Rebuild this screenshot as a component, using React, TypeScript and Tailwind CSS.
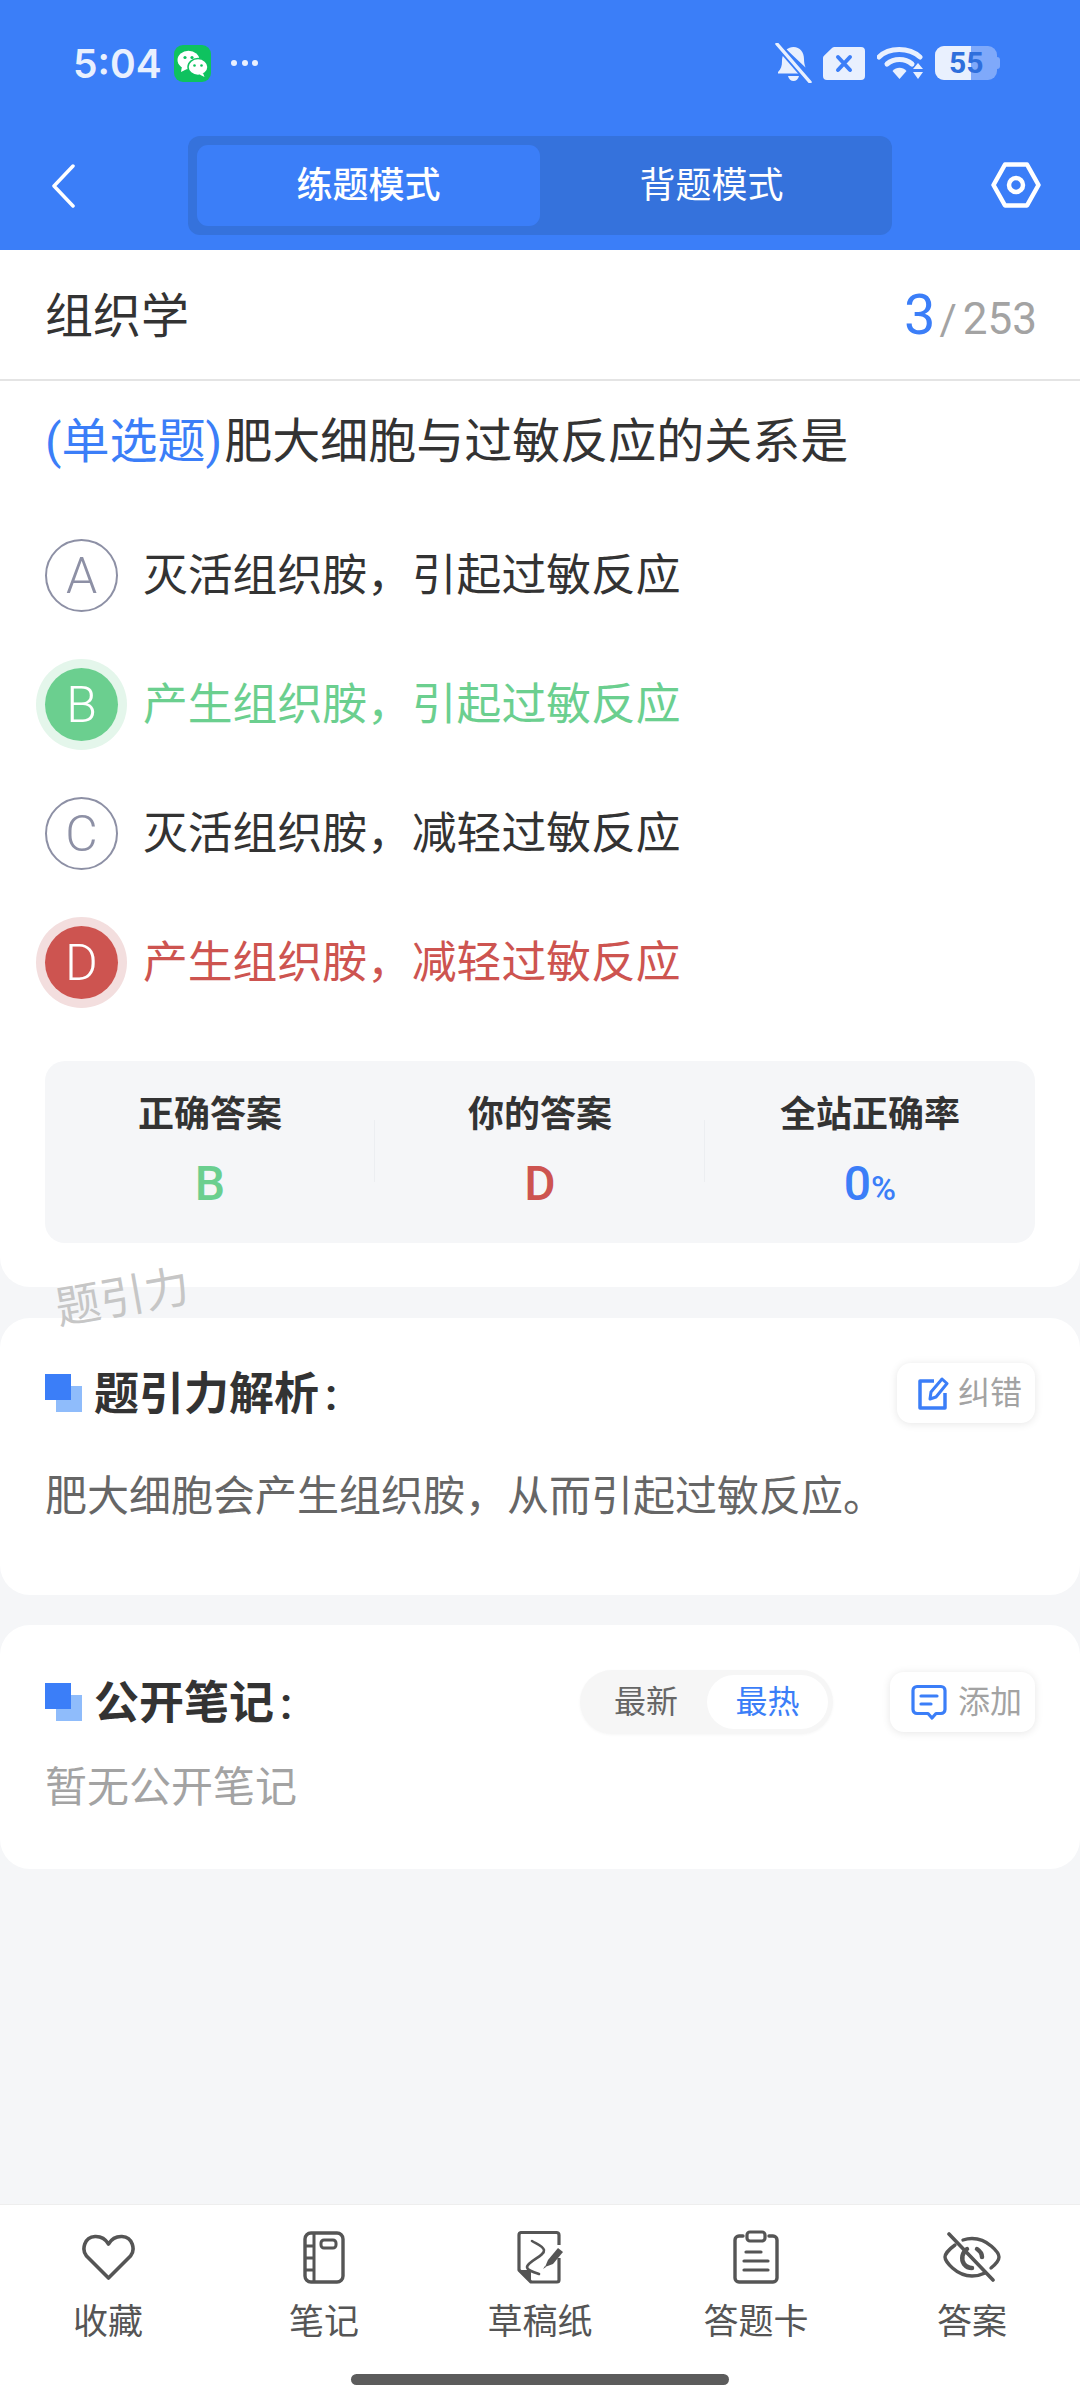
import React from "react";

const Squares = () => (
  <span className="relative block w-[37px] h-[38px] shrink-0">
    <span className="absolute right-0 bottom-0 w-[26px] h-[26px] bg-[#8fbcfb]" />
    <span className="absolute left-0 top-0 w-[26px] h-[26px] bg-[#3b7ef8]" />
  </span>
);

const options = [
  { k: "A", t: "灭活组织胺，引起过敏反应", s: "plain" },
  { k: "B", t: "产生组织胺，引起过敏反应", s: "ok" },
  { k: "C", t: "灭活组织胺，减轻过敏反应", s: "plain" },
  { k: "D", t: "产生组织胺，减轻过敏反应", s: "bad" },
];

function Option({ k, t, s }: { k: string; t: string; s: string }) {
  const circle =
    s === "ok"
      ? "bg-[#6bcf8f] text-white ring-[9px] ring-[#e4f6eb]"
      : s === "bad"
      ? "bg-[#cd5450] text-white ring-[9px] ring-[#f3dede]"
      : "border-2 border-[#8d90a5] text-[#8d90a5]";
  const text = s === "ok" ? "text-[#6bcf8f]" : s === "bad" ? "text-[#cd5450]" : "text-[#333333]";
  return (
    <div className="h-[129px] flex items-center">
      <span className={`w-[73px] h-[73px] rounded-full flex items-center justify-center text-[50px] font-light leading-none shrink-0 ${circle}`}>{k}</span>
      <span className={`ml-[25px] mt-[2px] text-[44.800px] leading-none whitespace-nowrap ${text}`}>{t}</span>
    </div>
  );
}

function Stat({ label, children, divider }: { label: string; children: React.ReactNode; divider?: boolean }) {
  return (
    <div className="relative w-[330px] flex flex-col items-center pt-[35px]">
      <span className="text-[36px] leading-[38px] font-semibold text-[#333333]">{label}</span>
      <span className="mt-[22px] h-[56px] flex items-baseline font-medium text-[48px] leading-[56px]">{children}</span>
      {divider && <span className="absolute right-0 top-[59px] h-[62px] w-[1px] bg-[#eceef1]" />}
    </div>
  );
}

const NavItem = ({ label, children }: { label: string; children: React.ReactNode }) => (
  <div className="w-[216px] flex flex-col items-center">
    <div className="h-[56px] flex items-center justify-center">{children}</div>
    <span className="mt-[19px] text-[35px] leading-[38px] text-[#555555]">{label}</span>
  </div>
);

export default function App() {
  return (
    <div className="relative w-[1080px] min-h-[2400px] flex flex-col bg-[#f5f6f8] font-['Roboto','Noto_Sans_CJK_SC',sans-serif] overflow-hidden">
      {/* header */}
      <header className="h-[250px] bg-[#3b7ef8] flex flex-col shrink-0">
        <div className="h-[126px] flex items-center pl-[73px] pr-[80px] text-[#e9f0fe]">
          <span className="font-['Inter',sans-serif] font-semibold text-[39px] leading-none w-[101px]">5:04</span>
          <span className="w-[37px] h-[37px] rounded-[9px] bg-[#0ec25f] flex items-center justify-center">
            <svg width="31" height="27" viewBox="0 0 31 27">
              <ellipse cx="11.5" cy="10" rx="11" ry="9.2" fill="#fff" />
              <path d="M5 16l-1 6 6-3z" fill="#fff" />
              <ellipse cx="21" cy="17" rx="10" ry="8.4" fill="#fff" stroke="#0ec25f" strokeWidth="1.5" />
              <path d="M26 23l1.5 4-5-2.5z" fill="#fff" />
              <circle cx="8" cy="7.5" r="1.6" fill="#0ec25f" />
              <circle cx="15" cy="7.5" r="1.6" fill="#0ec25f" />
              <circle cx="17.5" cy="15.5" r="1.3" fill="#0ec25f" />
              <circle cx="24.5" cy="15.5" r="1.3" fill="#0ec25f" />
            </svg>
          </span>
          <span className="ml-[20px] flex gap-[4.5px]">
            <span className="w-[6px] h-[6px] rounded-full bg-[#e9f0fe]" />
            <span className="w-[6px] h-[6px] rounded-full bg-[#e9f0fe]" />
            <span className="w-[6px] h-[6px] rounded-full bg-[#e9f0fe]" />
          </span>
          <span className="flex-1" />
          {/* bell off */}
          <svg width="37" height="40" viewBox="0 0 37 40" className="mr-[10px]">
            <path d="M3 29c3-3 4-6 4-11 0-3 .6-5 1.5-6.500L28 30.500H3z" fill="#e9f0fe" />
            <path d="M11.500 6.500C13.500 5 15.500 4 18.500 4 25 4 29 9 29 16c0 3 .5 6 1.500 8.500z" fill="#e9f0fe" />
            <path d="M13 33h11c-.6 3-3 5-5.500 5S13.600 36 13 33z" fill="#e9f0fe" />
            <path d="M2 1l33 38" stroke="#3b7ef8" strokeWidth="7" />
            <path d="M2 1l33 38" stroke="#e9f0fe" strokeWidth="3.400" strokeLinecap="round" />
          </svg>
          {/* sim x */}
          <svg width="44" height="35" viewBox="0 0 44 35" className="mr-[11px]">
            <path d="M13 1h26a4 4 0 0 1 4 4v25a4 4 0 0 1-4 4H5a4 4 0 0 1-4-4V12a3 3 0 0 1 1-2.300L10 2a4 4 0 0 1 3-1z" fill="#e9f0fe" />
            <path d="M16 11l12 13M28 11L16 24" stroke="#3b7ef8" strokeWidth="4" strokeLinecap="round" />
          </svg>
          {/* wifi */}
          <svg width="48" height="34" viewBox="0 0 48 34" className="mr-[10px]">
            <path d="M2 11C12 1 32 1 43 11" fill="none" stroke="#e9f0fe" strokeWidth="5" strokeLinecap="round" />
            <path d="M10 18c7-6 18-6 25 0" fill="none" stroke="#e9f0fe" strokeWidth="5" strokeLinecap="round" />
            <path d="M15.500 25c4-4.400 10-4.400 14 0l-7 8z" fill="#e9f0fe" />
            <path d="M41 17l5 6H36zM36 26h10l-5 7z" fill="#e9f0fe" />
          </svg>
          {/* battery */}
          <div className="relative w-[65px] h-[34px]">
            <span className="absolute left-0 top-0 w-[62px] h-[34px] rounded-[9px] bg-[#7fa9fa]" />
            <span className="absolute right-0 top-[11px] w-[4px] h-[12px] rounded-r-[3px] bg-[#7fa9fa]" />
            <span className="absolute left-0 top-0 w-[36px] h-[34px] rounded-l-[9px] bg-[#e9f0fe]" />
            <span className="absolute left-[14px] top-0 h-[34px] leading-[34px] text-[30px] font-bold text-[#2f6fdc]">55</span>
          </div>
        </div>
        <div className="flex items-center pt-[10px] relative">
          <svg width="24" height="44" viewBox="0 0 24 44" className="ml-[51px] shrink-0">
            <path d="M22 2L3 22l19 20" fill="none" stroke="#fff" strokeWidth="3.500" strokeLinecap="round" strokeLinejoin="round" />
          </svg>
          <div className="ml-[113px] w-[704px] h-[99px] rounded-[12px] bg-[#3572dc] p-[9px] flex text-[36px]">
            <div className="w-[343px] h-[81px] rounded-[11px] bg-[#3b7ef8] text-white font-medium flex items-center justify-center">练题模式</div>
            <div className="flex-1 text-white flex items-center justify-center">背题模式</div>
          </div>
          <svg width="50" height="46" viewBox="0 0 50 46" className="ml-[99px] -mt-[2px] shrink-0">
            <path d="M14 2.500h22L47.500 23 36 43.500H14L2.500 23z" fill="none" stroke="#fff" strokeWidth="4.500" strokeLinejoin="round" />
            <circle cx="25" cy="23" r="7" fill="none" stroke="#fff" strokeWidth="4.500" />
          </svg>
        </div>
      </header>

      {/* question card */}
      <section className="bg-white rounded-b-[30px] h-[1037px] shrink-0">
        <div className="h-[131px] border-b-2 border-[#e4e4e4] pl-[45px] pr-[43px] pt-[4px] flex items-center justify-between">
          <span className="text-[48px] text-[#333333] leading-none">组织学</span>
          <span className="flex items-baseline text-[#a3a3a3] leading-none -mt-[4px]">
            <span className="text-[56px] text-[#3b7ef8]">3</span>
            <span className="text-[42px] ml-[4px]">/</span>
            <span className="text-[44px] ml-[6px]">253</span>
          </span>
        </div>
        <div className="px-[45px]">
          <h1 className="h-[130px] pt-[33px] text-[48px] leading-[56px] font-normal whitespace-nowrap text-[#333333]">
            <span className="text-[#3b7ef8] mr-[2px]">(单选题)</span>肥大细胞与过敏反应的关系是
          </h1>
          <div className="flex flex-col">
            {options.map((o) => (
              <Option key={o.k} {...o} />
            ))}
          </div>
          <div className="mt-[34px] h-[182px] w-[990px] rounded-[20px] bg-[#f5f6f8] flex">
            <Stat label="正确答案" divider><span className="text-[#6bcf8f]">B</span></Stat>
            <Stat label="你的答案" divider><span className="text-[#cd5450]">D</span></Stat>
            <Stat label="全站正确率">
              <span className="text-[#3b7ef8]">0<span className="text-[34px]">%</span></span>
            </Stat>
          </div>
        </div>
      </section>

      {/* watermark */}
      <span className="absolute left-[55px] top-[1270px] text-[45px] leading-[56px] text-[#c6c6c6] -rotate-[10deg]">题引力</span>

      {/* analysis */}
      <section className="mt-[31px] bg-white rounded-[30px] h-[277px] shrink-0 px-[45px] pt-[45px]">
        <div className="flex items-center h-[60px]">
          <Squares />
          <h2 className="ml-[12px] mt-[2px] text-[45px] leading-none font-semibold text-[#333333]">题引力解析<span className="ml-[6px]">:</span></h2>
          <span className="flex-1" />
          <span className="w-[138px] h-[60px] rounded-[14px] bg-white shadow-[0_1px_8px_rgba(0,0,0,0.10)] flex items-center pl-[20px]">
            <svg width="32" height="34" viewBox="0 0 32 34">
              <path d="M17 5H3v27h25V17" fill="none" stroke="#3b7ef8" strokeWidth="3.500" strokeLinejoin="round" />
              <path d="M13 23l1-7L25 3l5 4.500L19 21z" fill="none" stroke="#3b7ef8" strokeWidth="3" strokeLinejoin="round" />
            </svg>
            <span className="ml-[9px] text-[32px] leading-none text-[#a3a3a3]">纠错</span>
          </span>
        </div>
        <p className="mt-[45px] text-[42px] leading-[58px] text-[#666666] whitespace-nowrap">肥大细胞会产生组织胺，从而引起过敏反应。</p>
      </section>

      {/* notes */}
      <section className="mt-[30px] bg-white rounded-[30px] h-[244px] shrink-0 px-[45px] pt-[45px]">
        <div className="flex items-center h-[64px]">
          <Squares />
          <h2 className="ml-[12px] mt-[2px] text-[45px] leading-none font-semibold text-[#333333]">公开笔记<span className="ml-[6px]">:</span></h2>
          <span className="flex-1" />
          <div className="w-[253px] h-[64px] rounded-full bg-[#f6f6f6] p-[5px] flex items-center text-[32px] shadow-[0_1px_3px_rgba(0,0,0,0.04)]">
            <span className="w-[122px] text-center text-[#666666] leading-none">最新</span>
            <span className="w-[121px] h-[54px] rounded-full bg-white text-[#3b7ef8] flex items-center justify-center">最热</span>
          </div>
          <span className="ml-[57px] w-[145px] h-[60px] rounded-[14px] bg-white shadow-[0_1px_8px_rgba(0,0,0,0.10)] flex items-center pl-[21px]">
            <svg width="36" height="36" viewBox="0 0 36 36">
              <path d="M6 2.500h24a4 4 0 0 1 4 4v19a4 4 0 0 1-4 4h-5l-4 4.500-4-4.500H6a4 4 0 0 1-4-4v-19a4 4 0 0 1 4-4z" fill="none" stroke="#3b7ef8" strokeWidth="3.200" strokeLinejoin="round" />
              <path d="M10 12h16M10 20h10" stroke="#3b7ef8" strokeWidth="3.200" strokeLinecap="round" />
            </svg>
            <span className="ml-[11px] text-[32px] leading-none text-[#a3a3a3]">添加</span>
          </span>
        </div>
        <p className="mt-[25px] text-[42px] leading-[58px] text-[#a3a3a3]">暂无公开笔记</p>
      </section>

      <div className="flex-1" />

      {/* bottom nav */}
      <nav className="h-[196px] bg-white border-t border-[#eeeeee] shrink-0 flex flex-col">
        <div className="flex pt-[24px]">
          <NavItem label="收藏">
            <svg width="53" height="47" viewBox="0 0 53 47">
              <path d="M26.500 44L4.500 22C-.5 16 2 3 13 2.500c6-.3 10.500 2.500 13.500 7.500 3-5 7.500-7.800 13.500-7.500C51 3 53.500 16 48.500 22z" fill="none" stroke="#555" strokeWidth="3.600" strokeLinejoin="round" />
            </svg>
          </NavItem>
          <NavItem label="笔记">
            <svg width="42" height="53" viewBox="0 0 42 53">
              <rect x="2" y="2" width="38" height="49" rx="6" fill="none" stroke="#555" strokeWidth="3.400" />
              <path d="M11 2v49M2 15h9M2 27h9M2 39h9" stroke="#555" strokeWidth="3" fill="none" />
              <rect x="18" y="9" width="15" height="8" rx="3" fill="none" stroke="#555" strokeWidth="3" />
            </svg>
          </NavItem>
          <NavItem label="草稿纸">
            <svg width="46" height="54" viewBox="0 0 46 54">
              <path d="M42 15V5a2.500 2.500 0 0 0-2.500-2.500H4A2.500 2.500 0 0 0 2 5v35l12 12h26a2 2 0 0 0 2-2V28" fill="none" stroke="#555" strokeWidth="3.200" strokeLinejoin="round" />
              <path d="M2 40h9a3 3 0 0 1 3 3v9z" fill="#555" />
              <path d="M15 11c5 3 11 5 12 9 1 6-16 11-17 17 0 3 6 5 12 7" fill="none" stroke="#555" strokeWidth="2.600" strokeLinecap="round" />
              <path d="M28 37l3-7 10-12 5 4-10 12z" fill="#555" />
              <path d="M26 39l3-2-1-1z" fill="#555" />
            </svg>
          </NavItem>
          <NavItem label="答题卡">
            <svg width="46" height="54" viewBox="0 0 46 54">
              <path d="M10 6H6a4 4 0 0 0-4 4v38a4 4 0 0 0 4 4h34a4 4 0 0 0 4-4V10a4 4 0 0 0-4-4h-4" fill="none" stroke="#555" strokeWidth="3.400" strokeLinecap="round" />
              <rect x="14" y="2" width="18" height="9" rx="3" fill="none" stroke="#555" strokeWidth="3.200" />
              <path d="M13 22h15M11 31h24M11 40h24" stroke="#555" strokeWidth="3.200" strokeLinecap="round" />
            </svg>
          </NavItem>
          <NavItem label="答案">
            <svg width="58" height="50" viewBox="0 0 58 50">
              <path d="M12 13C5 18 2 23 2 25c0 4 11 19 27 19 5 0 9-1 13-3M20 8c3-1 6-1.500 9-1.500C45 6.500 56 21 56 25c0 2.500-3 7-8 11" fill="none" stroke="#555" strokeWidth="3.400" strokeLinecap="round" />
              <path d="M24 17a11 11 0 0 0-3 15c2 2.500 5 4 8 4M34 17c3 2 5 5 5 8" fill="none" stroke="#555" strokeWidth="4.500" strokeLinecap="round" />
              <path d="M6 2l44 46" stroke="#555" strokeWidth="3.600" strokeLinecap="round" />
            </svg>
          </NavItem>
        </div>
        <span className="mt-[32px] self-center w-[378px] h-[11px] rounded-full bg-[#5c5c5c]" />
      </nav>
    </div>
  );
}
